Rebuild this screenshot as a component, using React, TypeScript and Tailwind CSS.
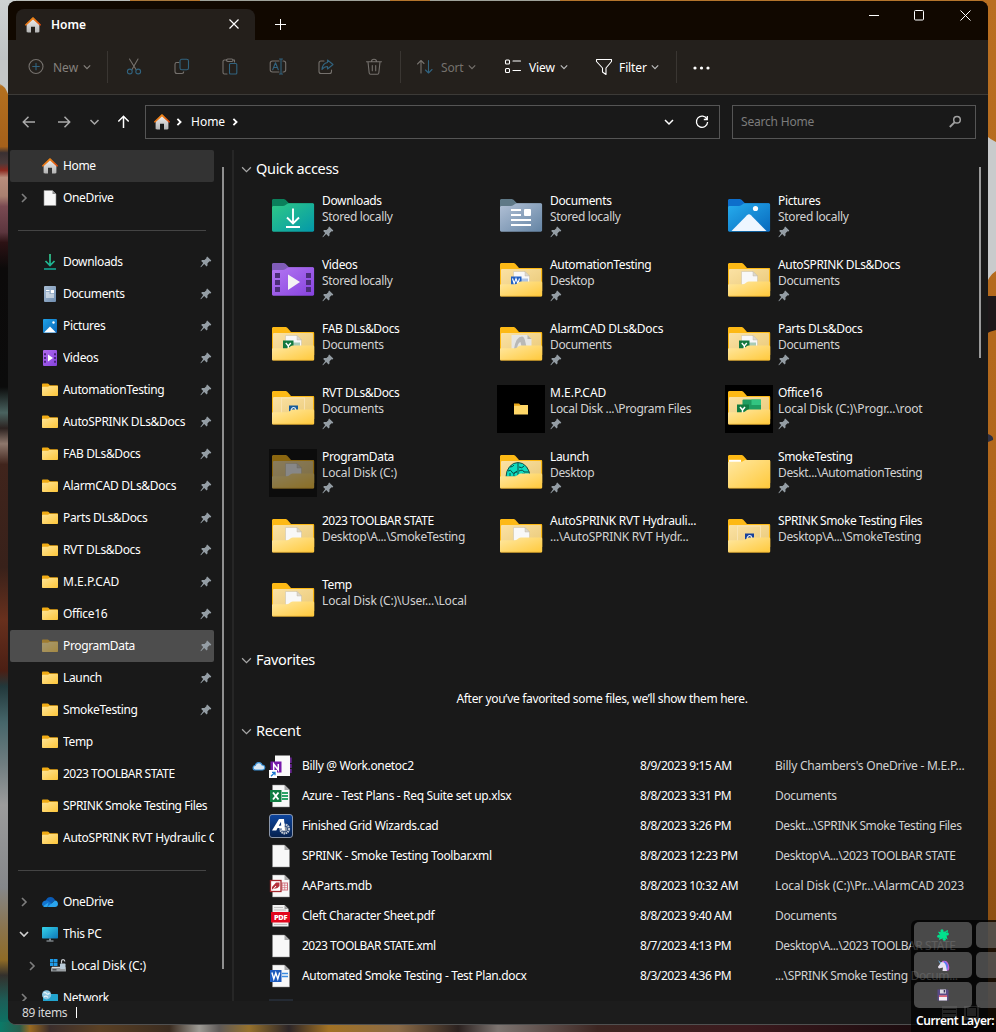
import React from "react";

/* ---------- wallpaper ---------- */

function Wallpaper() {
  return (
    <svg className="absolute inset-0" width="996" height="1032" viewBox="0 0 996 1032" aria-hidden="true">
      <defs>
        <linearGradient id="wl" x1="0" y1="0" x2="0" y2="1032" gradientUnits="userSpaceOnUse">
          <stop offset="0" stopColor="#cfd2d2" />
          <stop offset="0.079" stopColor="#b9bdbf" />
          <stop offset="0.084" stopColor="#b4701f" />
          <stop offset="0.142" stopColor="#a5601a" />
          <stop offset="0.148" stopColor="#3a3032" />
          <stop offset="0.158" stopColor="#4a3a3a" />
          <stop offset="0.165" stopColor="#8c2a20" />
          <stop offset="0.172" stopColor="#b98d7c" />
          <stop offset="0.19" stopColor="#a98070" />
          <stop offset="0.2" stopColor="#7a4a52" />
          <stop offset="0.225" stopColor="#5c363e" />
          <stop offset="0.235" stopColor="#2c1214" />
          <stop offset="0.26" stopColor="#0c0a0a" />
          <stop offset="0.375" stopColor="#0b0b0b" />
          <stop offset="0.4" stopColor="#49625f" />
          <stop offset="0.415" stopColor="#2c2220" />
          <stop offset="0.43" stopColor="#8d776c" />
          <stop offset="0.45" stopColor="#40241c" />
          <stop offset="0.55" stopColor="#38211a" />
          <stop offset="0.6" stopColor="#68301d" />
          <stop offset="0.65" stopColor="#4b1f14" />
          <stop offset="0.665" stopColor="#22383b" />
          <stop offset="0.7" stopColor="#46666a" />
          <stop offset="0.74" stopColor="#6f7d80" />
          <stop offset="0.78" stopColor="#9c9c9c" />
          <stop offset="0.86" stopColor="#85878a" />
          <stop offset="0.9" stopColor="#8b744d" />
          <stop offset="0.93" stopColor="#8f6b26" />
          <stop offset="0.945" stopColor="#33302c" />
          <stop offset="0.97" stopColor="#1c5e58" />
          <stop offset="1" stopColor="#067a68" />
        </linearGradient>
        <linearGradient id="wr" x1="0" y1="0" x2="0" y2="1032" gradientUnits="userSpaceOnUse">
          <stop offset="0" stopColor="#b96f21" />
          <stop offset="0.5" stopColor="#b0661b" />
          <stop offset="0.9" stopColor="#8b4f12" />
          <stop offset="1" stopColor="#3a200a" />
        </linearGradient>
        <linearGradient id="wb" x1="0" y1="0" x2="996" y2="0" gradientUnits="userSpaceOnUse">
          <stop offset="0" stopColor="#0a7a68" />
          <stop offset="0.02" stopColor="#2b5d4c" />
          <stop offset="0.03" stopColor="#9a6a20" />
          <stop offset="0.05" stopColor="#3b2e2c" />
          <stop offset="0.1" stopColor="#5a4024" />
          <stop offset="0.17" stopColor="#3b2c20" />
          <stop offset="0.2" stopColor="#9d9a94" />
          <stop offset="0.22" stopColor="#5f5a58" />
          <stop offset="0.25" stopColor="#96712c" />
          <stop offset="0.29" stopColor="#2d2628" />
          <stop offset="0.33" stopColor="#a27224" />
          <stop offset="0.4" stopColor="#8a6a46" />
          <stop offset="0.46" stopColor="#2c2220" />
          <stop offset="0.5" stopColor="#7d7470" />
          <stop offset="0.6" stopColor="#3d2622" />
          <stop offset="0.75" stopColor="#3c1a1e" />
          <stop offset="0.9" stopColor="#1f0d10" />
          <stop offset="1" stopColor="#120a08" />
        </linearGradient>
      </defs>
      <rect width="996" height="1032" fill="#2a1c14" />
      <rect width="996" height="3" fill="#b5752c" />
      <rect width="130" height="3" fill="#b9bcb8" />
      <rect x="200" width="190" height="3" fill="#9fa29a" />
      <rect x="430" width="130" height="3" fill="#9fa29a" />
      <rect x="140" width="50" height="3" fill="#a8783c" />
      <rect width="16" height="1032" fill="url(#wl)" />
      <path d="M0 84q5 2 8 10V60H0z" fill="#c4c7c7" />
      <rect x="980" width="16" height="1032" fill="url(#wr)" />
      <path d="M984 134q6 5 12 8V271q-7 4-12 18z" fill="#c9cbcc" />
      <path d="M984 296h12v34q-6 1-12 5z" fill="#1e181a" />
      <path d="M988 434q6 2 5 6l-5 2z" fill="#2c2f42" />
      <rect y="1022" width="996" height="10" fill="url(#wb)" />
    </svg>
  );
}

/* ---------- small glyphs ---------- */

function Chevron({ dir = "down", size = 8, color = "#fff", w = 1.2 }: { dir?: "down" | "right"; size?: number; color?: string; w?: number }) {
  return (
    <svg width={size} height={size} viewBox="0 0 8 8" fill="none" stroke={color} strokeWidth={w} className="shrink-0">
      {dir === "down" ? <path d="M.8 2.4 4 5.6l3.2-3.2" /> : <path d="M2.4.8 5.6 4 2.4 7.2" />}
    </svg>
  );
}

function Pin() {
  return (
    <svg width="12" height="12" viewBox="0 0 12 12" className="shrink-0">
      <path d="M7.200.5 11.300 4.500 10.600 5.400 9.600 5.200 7.500 7.200V9.600L6.600 10.400 4.200 8 1 11.200.4 10.900 3.200 7 1.200 4.900 2 4.100H4.500L6.600 2.100 6.400 1.200Z" fill="#949da4" />
    </svg>
  );
}

function HouseIcon() {
  return (
    <svg width="18" height="18" viewBox="0 0 18 18" className="shrink-0">
      <defs>
        <linearGradient id="hw" x1="0" y1="0" x2="0" y2="1">
          <stop offset="0" stopColor="#f2f2f2" />
          <stop offset="1" stopColor="#b4b4b4" />
        </linearGradient>
        <linearGradient id="hr" x1="0" y1="0" x2="1" y2="1">
          <stop offset="0" stopColor="#f7a01c" />
          <stop offset="1" stopColor="#d8420c" />
        </linearGradient>
      </defs>
      <path d="M2.600 8 9 2l6.400 6v7.200c0 .8-.4 1.200-1.200 1.200H11v-5.600H7v5.600H3.800c-.8 0-1.200-.4-1.200-1.200z" fill="url(#hw)" />
      <path d="M8.300 1.500c.5-.4.9-.4 1.400 0l7.200 7c.4.5-.5 1.600-1.100 1.100L9 3.500 2.200 9.600c-.6.5-1.500-.6-1.100-1.100z" fill="url(#hr)" />
    </svg>
  );
}

function ToolSvg({ children, color = "#75716d" }: { children: React.ReactNode; color?: string }) {
  return (
    <svg width="18" height="18" viewBox="0 0 18 18" fill="none" stroke={color} strokeWidth="1.1" strokeLinecap="round" strokeLinejoin="round" className="shrink-0">
      {children}
    </svg>
  );
}
const BLUE = "#31637f";

/* ---------- sidebar icons ---------- */

function FolderSmall({ dim }: { dim?: boolean }) {
  return (
    <svg width="16" height="14" viewBox="0 0 16 14" className="shrink-0" opacity={dim ? 0.5 : 1}>
      <defs>
        <linearGradient id="fs" x1="0" y1="0" x2="1" y2="1">
          <stop offset="0" stopColor="#ffe596" />
          <stop offset="1" stopColor="#fdc63a" />
        </linearGradient>
      </defs>
      <path d="M0 1.600C0 1 .4.5 1 .5h4.600c.5 0 .8.2 1.100.5l1.100 1.200H15c.6 0 1 .4 1 1V9H0z" fill="#f0ab14" />
      <path d="M0 4.800c0-.6.4-1 1-1h5l1.300-.8H15c.6 0 1 .4 1 1v8c0 .6-.4 1-1 1H1c-.6 0-1-.4-1-1z" fill="url(#fs)" />
    </svg>
  );
}

function SmallIcon({ kind }: { kind: string }) {
  switch (kind) {
    case "home":
      return <HouseIcon />;
    case "file":
      return (
        <svg width="16" height="16" viewBox="0 0 16 16">
          <path d="M2 .5h8.500L14 4v11.500H2z" fill="#f7f7f7" stroke="#8e8e8e" strokeWidth=".6" />
          <path d="M10.500.5V4H14z" fill="#8d8d8d" />
        </svg>
      );
    case "downloads":
      return (
        <svg width="16" height="16" viewBox="0 0 16 16" fill="none" strokeWidth="1.7">
          <defs>
            <linearGradient id="dg" x1="0" y1="0" x2="0" y2="16" gradientUnits="userSpaceOnUse">
              <stop offset="0" stopColor="#35c78a" />
              <stop offset="1" stopColor="#10a99a" />
            </linearGradient>
          </defs>
          <path d="M8.010 0 8 11.500M3.500 7 8 11.600 12.500 7M2 15l12-.01" stroke="url(#dg)" />
        </svg>
      );
    case "documents":
      return (
        <svg width="16" height="16" viewBox="0 0 16 16">
          <defs>
            <linearGradient id="dc" x1="0" y1="0" x2="1" y2="1">
              <stop offset="0" stopColor="#a9bdd4" />
              <stop offset="1" stopColor="#6f8db0" />
            </linearGradient>
          </defs>
          <rect x="2" width="12" height="16" rx="1" fill="url(#dc)" />
          <path d="M4 4.500h3.500M4 7h3.500M4 9h8M4 11h8" stroke="#fff" strokeWidth="1" />
          <rect x="8.800" y="4" width="3.200" height="3.200" fill="#fff" />
        </svg>
      );
    case "pictures":
      return (
        <svg width="16" height="16" viewBox="0 0 16 16">
          <defs>
            <linearGradient id="pc" x1="0" y1="0" x2="1" y2="1">
              <stop offset="0" stopColor="#1ea2e8" />
              <stop offset="1" stopColor="#0b66b8" />
            </linearGradient>
          </defs>
          <rect x="1" y="1" width="14" height="14" rx="1" fill="url(#pc)" />
          <path d="M2 14.500 8 8.500l6 6z" fill="#fff" />
          <circle cx="11.500" cy="4.500" r="1.200" fill="#fff" />
        </svg>
      );
    case "videos":
      return (
        <svg width="16" height="16" viewBox="0 0 16 16">
          <defs>
            <linearGradient id="vd" x1="0" y1="0" x2="1" y2="1">
              <stop offset="0" stopColor="#b16af0" />
              <stop offset="1" stopColor="#8542dc" />
            </linearGradient>
          </defs>
          <rect x="1" width="14" height="16" rx="1" fill="url(#vd)" />
          <path d="M2 3.200h2v2H2zM2 7h2v2H2zM2 10.800h2v2H2zM12 3.200h2v2h-2zM12 7h2v2h-2zM12 10.800h2v2h-2z" fill="#4c2480" />
          <path d="M6 4.500 11 8l-5 3.500z" fill="#fff" />
        </svg>
      );
    case "cloud":
      return (
        <svg width="16" height="12" viewBox="0 0 16 12">
          <path d="M3 9.500C3 4 5 1 8.500 1c2.300 0 4 1.500 4.700 3.600L7 9z" fill="#0a5bb5" />
          <path d="M0 8.500C0 6 2 4.600 4 4.600c2 0 4 1.500 8 5.500H3C1.300 10.100 0 9.900 0 8.500z" fill="#1273cf" />
          <path d="M5.500 10.800 13 4.600c1.800.2 3 1.700 3 3.300 0 1.800-1.300 3-3 3H3C2 10.900 1.500 10.700 1 10.200L6.500 6.500z" fill="#2aa5ef" />
        </svg>
      );
    case "pc":
      return (
        <svg width="16" height="16" viewBox="0 0 16 16">
          <defs>
            <linearGradient id="mn" x1="0" y1="0" x2="1" y2="1">
              <stop offset="0" stopColor="#35d3ea" />
              <stop offset="1" stopColor="#0d77b8" />
            </linearGradient>
          </defs>
          <rect x="0" y="1" width="16" height="11.500" rx=".7" fill="url(#mn)" />
          <path d="M7 12.500h2v2H7z" fill="#7d8a92" />
          <path d="M4.500 14.500h7v1h-7z" fill="#aab4ba" />
        </svg>
      );
    case "disk":
      return (
        <svg width="16" height="16" viewBox="0 0 16 16">
          <path d="M0 1h3.500v3.300H0zM4 1h3.500v3.300H4zM0 4.800h3.500v3.300H0zM4 4.800h3.500v3.300H4z" fill="#1f9be8" />
          <path d="M2 8.800h13l1 1.700H1z" fill="#dadada" />
          <rect x="1" y="10.200" width="15" height="3.300" rx=".6" fill="#9aa0a4" />
          <rect x="2.500" y="11.200" width="4" height="1.200" fill="#3a3f42" />
          <path d="M11.500 5.500V3.500c0-2.600 3.300-2.600 3.300 0" fill="none" stroke="#c9ccd0" strokeWidth="1.200" />
          <rect x="10" y="5.500" width="5.500" height="5.500" rx=".8" fill="#b9cbd8" />
        </svg>
      );
    case "network":
      return (
        <svg width="16" height="16" viewBox="0 0 16 16">
          <rect x="1" y="4" width="15" height="9.500" rx=".7" fill="#22a4cf" />
          <circle cx="4.600" cy="4.800" r="4.600" fill="#8cc6e2" />
          <path d="M1.500 3q2-1 3 .5t3-.5M2 7q2-2 4 .5" stroke="#e9f6fb" strokeWidth="1.200" fill="none" />
        </svg>
      );
    case "folderdim":
      return <FolderSmall dim />;
    default:
      return <FolderSmall />;
  }
}

/* ---------- large folder icons ---------- */

function SheetTop({ accent }: { accent?: string }) {
  return (
    <g>
      <path d="M16.500 14.500h11.500l4.500 4.500v9H16.500z" fill="#f8f8f8" stroke="#c9bfa6" strokeWidth=".5" />
      <path d="M28 14.500v4.500h4.500z" fill="#ddd8cc" stroke="#bdb39c" strokeWidth=".4" />
      {accent && (
        <>
          <path d="M24 21.500h7v6h-7z" fill={accent} opacity=".35" />
          <rect x="14" y="19.500" width="10.500" height="9" fill={accent} />
        </>
      )}
    </g>
  );
}

function BigFolder({ kind }: { kind: string }) {
  const yellow = !["downloads", "documents", "pictures", "videos"].includes(kind);
  if (kind === "mini") {
    return (
      <svg width="48" height="48" viewBox="0 0 48 48" className="shrink-0">
        <rect width="48" height="48" fill="#000" />
        <path d="M17 18.500h5l1.500 1.500H31v8H17z" fill="#e8a617" />
        <path d="M17 20.700h5.500l1.200-.7H31v9.500H17z" fill="#ffd768" />
      </svg>
    );
  }
  if (!yellow) {
    const tab = { downloads: "#0b7f5b", documents: "#5f7987", pictures: "#0d6ecb", videos: "#805cb8" }[kind];
    const [a, b] = ({ downloads: ["#2fc986", "#0398aa"], documents: ["#b2c1d6", "#6484a4"], pictures: ["#26adee", "#0869bd"], videos: ["#b477f2", "#8642df"] } as Record<string, string[]>)[kind];
    return (
      <svg width="48" height="48" viewBox="0 0 48 48" className="shrink-0">
        <defs>
          <linearGradient id={"big-" + kind} x1="0" y1="0" x2="1" y2="1">
            <stop offset="0" stopColor={a} />
            <stop offset="1" stopColor={b} />
          </linearGradient>
        </defs>
        <path d="M3 7.500C3 6.600 3.600 6 4.500 6h10c.8 0 1.400.2 2 .8L20 10.200h24V20H3z" fill={tab} />
        <path d="M3 14.500c0-.9.600-1.500 1.500-1.500H14c.9 0 1.500-.2 2.200-.8L18 10.900c.6-.5 1.200-.7 2-.7h23.700c.8 0 1.400.6 1.400 1.400v25.700c0 .9-.6 1.400-1.400 1.400H4.400c-.8 0-1.400-.6-1.400-1.400z" fill={"url(#big-" + kind + ")"} />
        {kind === "downloads" && <path d="M24 15.500v15M18 24.500l6 6 6-6M17 34h14" stroke="#fff" strokeWidth="1.900" fill="none" />}
        {kind === "documents" && (
          <>
            <path d="M14 17h10M14 22h10M14 27h20M14 32h20" stroke="#fff" strokeWidth="2" />
            <rect x="27" y="16" width="7" height="7" rx="1" fill="#fff" />
          </>
        )}
        {kind === "pictures" && (
          <>
            <path d="M6.500 38 22 22.300c1.400-1.400 2.600-1.400 4 0L41.500 38z" fill="#eef6ff" />
            <circle cx="30.500" cy="15.500" r="2.600" fill="#fff" />
          </>
        )}
        {kind === "videos" && (
          <>
            <path d="M6 16h5v5H6zM6 23h5v5H6zM6 30h5v5H6zM37 16h5v5h-5zM37 23h5v5h-5zM37 30h5v5h-5z" fill="#4b2d78" />
            <path d="M19 17.500 31 25l-12 8z" fill="#f4f4f4" />
          </>
        )}
      </svg>
    );
  }
  const dim = kind === "dim";
  const black = dim || kind === "office";
  return (
    <svg width="48" height="48" viewBox="0 0 48 48" className="shrink-0">
      <defs>
        <linearGradient id="bfront" x1="0" y1="0" x2="1" y2="1">
          <stop offset="0" stopColor="#ffe8a2" />
          <stop offset="1" stopColor="#ffc93b" />
        </linearGradient>
        <linearGradient id="bin" x1="0" y1="0" x2="1" y2="1">
          <stop offset="0" stopColor="#fbe2a4" />
          <stop offset="1" stopColor="#e9c877" />
        </linearGradient>
      </defs>
      {black && <rect width="48" height="48" fill={dim ? "#0c0c0c" : "#000"} />}
      <g opacity={dim ? 0.52 : 1}>
        <path d="M3 7.500C3 6.600 3.600 6 4.500 6h12c.8 0 1.300.2 1.800.8L22 11h22c.7 0 1.200.5 1.200 1.200V34H3z" fill="#fdb915" />
        {kind === "full" ? (
          <>
            <path d="M4 10.800h12v3H4z" fill="#fff" />
            <path d="M3 14c0-.8.5-1.300 1.300-1.300H17l3-1.700h24c.7 0 1.200.5 1.200 1.200v25.700c0 .8-.5 1.300-1.300 1.300H4.300c-.8 0-1.300-.5-1.300-1.300z" fill="url(#bfront)" />
          </>
        ) : (
          <>
            <rect x="4" y="12" width="40" height="22" rx="1" fill="url(#bin)" />
            {(kind === "plain" || kind === "dim") && <SheetTop />}
            {kind === "word" && <SheetTop accent="#2160c4" />}
            {kind === "excel" && <SheetTop accent="#13783f" />}
            {kind === "word" && <path d="m15.500 21.500 1.700 5 1.800-5 1.800 5 1.700-5" stroke="#fff" strokeWidth="1.100" fill="none" />}
            {kind === "excel" && <path d="m16.800 22 2.500 3 2.500-3M19.300 25v3" stroke="#fff" strokeWidth="1.400" fill="none" />}
            {kind === "alarm" && (
              <>
                <path d="M14.500 14h16l4 4v10h-20z" fill="#e6e6e4" />
                <path d="M17 28q2-12.500 8-12.500 2 0 3 4l2 8.500h-5l-1.500-7q-3 1-3.500 7z" fill="#b9b9b7" />
                <path d="M30.500 14v4h4z" fill="#b9b4a8" />
              </>
            )}
            {(kind === "rvt" || kind === "sprink") && (
              <>
                <rect x="12.500" y="13" width="23" height="17" fill="none" stroke="#fae7b8" strokeWidth=".8" />
                <rect x="20" y="20.500" width="9" height="7" fill={kind === "rvt" ? "#145a9a" : "#15409c"} />
                <path d="M22 25q1.500-3.500 4-2l1 2.500" stroke="#e9f0fa" strokeWidth="1.100" fill="none" />
              </>
            )}
            {kind === "office" && (
              <>
                <rect x="17.500" y="14.500" width="18.500" height="13" rx="1" fill="#1f9d61" />
                <path d="M26.500 14.500H36v5.500h-9.500z" fill="#33c481" />
                <rect x="12" y="19.500" width="12" height="9" fill="#107c41" />
                <path d="m15 22 2.500 3 2.500-3M17.500 25v3" stroke="#fff" strokeWidth="1.500" fill="none" />
              </>
            )}
            {kind === "launch" && (
              <>
                <path d="M9 28a12 14.500 0 0 1 24 0z" fill="#0fdcc0" stroke="#123c38" strokeWidth=".9" />
                <path d="M21 14v14M11 22q3-2 4 1t5-1M13 18q3 0 4-2M17 27q-1-4 3-4M22 18q3 2 5-1M22 22q4-2 5 1h5M24 27q0-3 4-2M13 27v-3" stroke="#0b4b45" strokeWidth="1" fill="none" />
              </>
            )}
            <path d="M3 28.600c0-.8.5-1.300 1.300-1.300H18c.9 0 1.400-.2 2-.7l2-1.500c.5-.3 1-.5 1.700-.5h20.200c.8 0 1.300.5 1.300 1.300v12.300c0 .8-.5 1.300-1.300 1.300H4.300c-.8 0-1.300-.5-1.300-1.300z" fill="url(#bfront)" />
          </>
        )}
        <path d="M3.800 39.300h40.400" stroke="#d69c20" strokeWidth=".6" />
      </g>
    </svg>
  );
}

/* ---------- file icons ---------- */

function Page() {
  return (
    <g>
      <path d="M3.500 1h12l5 5v17h-17z" fill="#f8f8f8" stroke="#8a8a8a" strokeWidth=".5" />
      <path d="M15.500 1v5h5z" fill="#a9a9a9" />
    </g>
  );
}

function FileIcon({ kind }: { kind: string }) {
  return (
    <svg width="24" height="24" viewBox="0 0 24 24" className="shrink-0">
      {kind === "onenote" && (
        <>
          <path d="M6 1.500h15v20.500H6z" fill="#fafafa" />
          <path d="M21 3.500h1.700V9H21zM21 10h1.700v4H21zM21 15h1.700v4H21z" fill="#6a2594" />
          <rect x="1.500" y="7.500" width="11" height="11" fill="#7719aa" />
          <path d="M4.700 16v-6l4.600 6v-6" stroke="#fff" strokeWidth="1.500" fill="none" />
          <rect x="0" y="16" width="8" height="8" fill="#fff" />
          <path d="M2 22.200 5.500 18.700M3 18.300h3v3" stroke="#1a78d0" strokeWidth="1.300" fill="none" />
        </>
      )}
      {kind === "xml" && <Page />}
      {kind === "xlsx" && (
        <>
          <Page />
          <path d="M13 9h6M13 12h6M13 15h6" stroke="#2ba367" strokeWidth="1.800" />
          <rect x="1" y="6" width="11.500" height="12" fill="#107c41" />
          <path d="m4 8.500 5.500 7M9.500 8.500 4 15.500" stroke="#fff" strokeWidth="1.900" />
        </>
      )}
      {kind === "docx" && (
        <>
          <Page />
          <path d="M13 9.500h6M13 12.500h6" stroke="#3a8be0" strokeWidth="1.400" />
          <rect x="1" y="6" width="11.500" height="12" fill="#1c5abd" />
          <path d="m2.900 8.500 1.900 6.500 2-6 2 6 1.900-6.500" stroke="#fff" strokeWidth="1.400" fill="none" />
        </>
      )}
      {kind === "mdb" && (
        <>
          <Page />
          <rect x="13" y="9" width="5.500" height="7" fill="none" stroke="#d2707c" strokeWidth="1" />
          <path d="M13 11.300h5.500M13 13.600h5.500M15.700 9v7" stroke="#d2707c" strokeWidth=".7" />
          <rect x="1.500" y="6.500" width="10.500" height="11" fill="#fff" stroke="#a4262c" strokeWidth="1.300" />
          <path d="M3 15.500V13l4-4.500h3.500V12l-2 2z" fill="#b5303c" />
          <path d="m4 15.500 3-3.500" stroke="#fff" strokeWidth="1" />
        </>
      )}
      {kind === "pdf" && (
        <>
          <path d="M3.500 1h12l4 4v17.500h-16z" fill="#efefef" />
          <path d="M5 3.500h9M5 6h12M5 20.500h13" stroke="#b9b9b9" strokeWidth=".9" />
          <path d="M15.500 1v4h4z" fill="#9d9d9d" />
          <rect x="2" y="8" width="19" height="10.500" fill="#e2061c" />
          <text x="11.500" y="16" textAnchor="middle" fontFamily="Open Sans" fontSize="7.500" fontWeight="800" fill="#fff">PDF</text>
        </>
      )}
      {kind === "cad" && (
        <>
          <defs>
            <linearGradient id="cad" x1="0" y1="0" x2="0" y2="1">
              <stop offset="0" stopColor="#0d46a0" />
              <stop offset="1" stopColor="#06204c" />
            </linearGradient>
          </defs>
          <rect x=".5" y=".5" width="23" height="23" rx="2.500" fill="url(#cad)" stroke="#a8b2c4" strokeWidth=".8" />
          <circle cx="15.700" cy="15" r="4.300" fill="none" stroke="#c2c8d0" strokeWidth="2.200" strokeDasharray="1.500 .6" />
          <circle cx="15.700" cy="15" r="2.600" fill="#8d96a4" />
          <path d="M3 16.500 10 5h5l1 11.500h-3.200L12.400 14H8.600l-1.300 2.500zM9.800 11.700h2.400L12 7.800z" fill="#fff" />
        </>
      )}
    </svg>
  );
}

/* ---------- data ---------- */

type Nav = { t: string; k?: string; pin?: boolean; chev?: "down" | "right"; bg?: string; indent?: boolean };

const navTop: Nav[] = [
  { t: "Home", k: "home", bg: "bg-[#333333]" },
  { t: "OneDrive", k: "file", chev: "right" },
];
const navMid: Nav[] = [
  { t: "Downloads", k: "downloads", pin: true },
  { t: "Documents", k: "documents", pin: true },
  { t: "Pictures", k: "pictures", pin: true },
  { t: "Videos", k: "videos", pin: true },
  { t: "AutomationTesting", pin: true },
  { t: "AutoSPRINK DLs&Docs", pin: true },
  { t: "FAB DLs&Docs", pin: true },
  { t: "AlarmCAD DLs&Docs", pin: true },
  { t: "Parts DLs&Docs", pin: true },
  { t: "RVT DLs&Docs", pin: true },
  { t: "M.E.P.CAD", pin: true },
  { t: "Office16", pin: true },
  { t: "ProgramData", k: "folderdim", pin: true, bg: "bg-[#4d4d4d]" },
  { t: "Launch", pin: true },
  { t: "SmokeTesting", pin: true },
  { t: "Temp" },
  { t: "2023 TOOLBAR STATE" },
  { t: "SPRINK Smoke Testing Files" },
  { t: "AutoSPRINK RVT Hydraulic C" },
];
const navBottom: Nav[] = [
  { t: "OneDrive", k: "cloud", chev: "right" },
  { t: "This PC", k: "pc", chev: "down" },
  { t: "Local Disk (C:)", k: "disk", chev: "right", indent: true },
  { t: "Network", k: "network", chev: "right" },
];

const quick: [string, string, string, boolean][] = [
  ["Downloads", "Stored locally", "downloads", true],
  ["Documents", "Stored locally", "documents", true],
  ["Pictures", "Stored locally", "pictures", true],
  ["Videos", "Stored locally", "videos", true],
  ["AutomationTesting", "Desktop", "word", true],
  ["AutoSPRINK DLs&Docs", "Documents", "plain", true],
  ["FAB DLs&Docs", "Documents", "excel", true],
  ["AlarmCAD DLs&Docs", "Documents", "alarm", true],
  ["Parts DLs&Docs", "Documents", "excel", true],
  ["RVT DLs&Docs", "Documents", "rvt", true],
  ["M.E.P.CAD", "Local Disk ...\\Program Files", "mini", true],
  ["Office16", "Local Disk (C:)\\Progr...\\root", "office", true],
  ["ProgramData", "Local Disk (C:)", "dim", true],
  ["Launch", "Desktop", "launch", true],
  ["SmokeTesting", "Deskt...\\AutomationTesting", "full", true],
  ["2023 TOOLBAR STATE", "Desktop\\A...\\SmokeTesting", "plain", false],
  ["AutoSPRINK RVT Hydrauli...", "...\\AutoSPRINK RVT Hydr...", "plain", false],
  ["SPRINK Smoke Testing Files", "Desktop\\A...\\SmokeTesting", "sprink", false],
  ["Temp", "Local Disk (C:)\\User...\\Local", "plain", false],
];

const recent: [string, string, string, string][] = [
  ["onenote", "Billy @ Work.onetoc2", "8/9/2023 9:15 AM", "Billy Chambers's OneDrive - M.E.P..."],
  ["xlsx", "Azure - Test Plans - Req Suite set up.xlsx", "8/8/2023 3:31 PM", "Documents"],
  ["cad", "Finished Grid Wizards.cad", "8/8/2023 3:26 PM", "Deskt...\\SPRINK Smoke Testing Files"],
  ["xml", "SPRINK - Smoke Testing Toolbar.xml", "8/8/2023 12:23 PM", "Desktop\\A...\\2023 TOOLBAR STATE"],
  ["mdb", "AAParts.mdb", "8/8/2023 10:32 AM", "Local Disk (C:)\\Pr...\\AlarmCAD 2023"],
  ["pdf", "Cleft Character Sheet.pdf", "8/8/2023 9:40 AM", "Documents"],
  ["xml", "2023 TOOLBAR STATE.xml", "8/7/2023 4:13 PM", "Desktop\\A...\\2023 TOOLBAR STATE"],
  ["docx", "Automated Smoke Testing - Test Plan.docx", "8/3/2023 4:36 PM", "...\\SPRINK Smoke Testing Docum..."],
];

function tracking(t: string) {
  if (t.includes("(C:)")) return "tracking-[-0.16px]";
  if (t === "M.E.P.CAD") return "tracking-[0px]";
  if (t.includes("M.E.P")) return "tracking-[-0.24px]";
  if (t.includes("AlarmCAD") || t.includes("Hydr")) return "tracking-[-0.27px]";
  if (t.startsWith("2023 TOOLBAR")) return "tracking-[-0.5px]";
  if (t.includes("2023 TOOLBAR") || t.includes("Testing Files")) return "tracking-[-0.42px]";
  return "tracking-[-0.35px]";
}

/* ---------- sections ---------- */

function TitleBar() {
  return (
    <div className="flex h-[39px] shrink-0 bg-[#110800]">
      <div className="ml-2 mt-2 flex h-[31px] w-[239px] items-center rounded-t-lg bg-[#241f1b] pl-2">
        <HouseIcon />
        <span className="ml-[9px] flex-1 text-[12px] font-semibold text-white">Home</span>
        <svg width="10" height="10" viewBox="0 0 10 10" stroke="#fff" strokeWidth="1.200" className="mb-[2px] mr-[16px]">
          <path d="m.5.5 9 9M9.500.5l-9 9" />
        </svg>
      </div>
      <svg width="11" height="11" viewBox="0 0 11 11" stroke="#fff" strokeWidth="1" className="ml-5 mt-[18px]">
        <path d="M5.500 0v11M0 5.500h11" />
      </svg>
      <div className="ml-auto flex h-7 items-center gap-[35px] pr-[17px]">
        <svg width="10" height="10" viewBox="0 0 10 10" stroke="#fff"><path d="M0 5.500h10" /></svg>
        <svg width="11" height="11" viewBox="0 0 11 11" stroke="#fff" fill="none"><rect x=".5" y=".5" width="9" height="9.500" rx="1" /></svg>
        <svg width="11" height="11" viewBox="0 0 11 11" stroke="#fff"><path d="m.5.5 10 10M10.500.5l-10 10" /></svg>
      </div>
    </div>
  );
}

function Slot({ w, children }: { w: string; children: React.ReactNode }) {
  return <div className={"flex h-full shrink-0 items-center " + w}>{children}</div>;
}

function Toolbar() {
  return (
    <div className="flex h-[55px] shrink-0 items-center border-b border-[#3c3a37] bg-[#24201c] text-[12px]">
      <Slot w="w-[99px] pl-[19px] text-[#85817d]">
        <ToolSvg>
          <circle cx="9" cy="8.500" r="7" />
          <path d="M9 5.200v6.600M5.700 8.500h6.600" stroke={BLUE} />
        </ToolSvg>
        <span className="ml-2 mr-[5px] pt-[2px]">New</span>
        <Chevron color="#85817d" />
      </Slot>
      <div className="h-8 w-px bg-[#3a3632]" />
      <Slot w="w-[48px] pl-[17px]">
        <ToolSvg>
          <path d="M4.500 1 11 11.500M13 1 7 11.500" />
          <circle cx="4.800" cy="13.500" r="2.400" stroke={BLUE} />
          <circle cx="13.200" cy="13.500" r="2.400" stroke={BLUE} />
        </ToolSvg>
      </Slot>
      <Slot w="w-[48px] pl-[17px]">
        <ToolSvg>
          <path d="M6 4.500H3.700C2.600 4.500 2 5.200 2 6.200v7.300c0 1.200.8 2 2 2h5c1 0 1.700-.6 1.700-1.700" />
          <rect x="7" y="1.300" width="8.500" height="10.500" rx="1.800" stroke={BLUE} />
        </ToolSvg>
      </Slot>
      <Slot w="w-[48px] pl-[17px]">
        <ToolSvg>
          <path d="M6 2H3.500C2.700 2 2 2.600 2 3.500v11c0 .9.700 1.500 1.500 1.500H6M12 2h1.500v2" />
          <rect x="5.500" y="1" width="6.500" height="2.500" rx="1.200" />
          <rect x="8.500" y="5.500" width="7.300" height="10.500" rx="1" stroke={BLUE} />
        </ToolSvg>
      </Slot>
      <Slot w="w-[48px] pl-[17px]">
        <ToolSvg>
          <path d="M10 3H3.500C2.200 3 1.200 4 1.200 5.200v6.600c0 1.200 1 2.200 2.300 2.200H10M14 3h.5c1.200 0 2.200 1 2.200 2.200v6.600c0 1.200-1 2.200-2.200 2.200H14" />
          <path d="m3.700 11.700 2.800-7 2.800 7M4.700 9.500h3.600M12 1v15M10.500 1h3M10.500 16h3" stroke={BLUE} />
        </ToolSvg>
      </Slot>
      <Slot w="w-[48px] pl-[17px]">
        <ToolSvg>
          <path d="M7 3H4C2.800 3 2 3.800 2 5v8.500c0 1.200.8 2 2 2h8.500c1.200 0 2-.8 2-2V12" />
          <path d="M10.500 2 16 6.500 10.500 11V8.500C8 8.500 6.500 9.500 5 11.500c.3-3.800 2-6.500 5.500-7z" stroke={BLUE} />
        </ToolSvg>
      </Slot>
      <Slot w="w-[52px] pl-[17px]">
        <ToolSvg>
          <path d="M1.500 3.700h15M6.500 3.500c0-3 5-3 5 0M3 4l1.200 11c.1.700.6 1.200 1.300 1.200h7c.7 0 1.200-.5 1.300-1.200L15 4M7.300 7.500v5.300M10.700 7.500v5.300" />
        </ToolSvg>
      </Slot>
      <div className="h-8 w-px bg-[#3a3632]" />
      <Slot w="w-[88px] pl-[15px] text-[#75716d]">
        <ToolSvg>
          <path d="M5 15V2.500M1.500 6 5 2.500 8 5.500" />
          <path d="M12.500 2.500V15M9.500 12l3 3 3.500-3.500" stroke={BLUE} />
        </ToolSvg>
        <span className="ml-[7px] mr-[5px] pt-[2px] tracking-[-0.2px]">Sort</span>
        <Chevron color="#75716d" />
      </Slot>
      <Slot w="w-[91px] pl-[15px] text-white">
        <ToolSvg color="#fff">
          <rect x="1.500" y="2" width="4" height="4" rx="1" />
          <rect x="1.500" y="10.500" width="4" height="4" rx="1" />
          <path d="M9 3h7.500M9 12.500h7.500" />
        </ToolSvg>
        <span className="ml-[7px] mr-[5px] pt-[2px] tracking-[-0.1px]">View</span>
        <Chevron color="#bbb" />
      </Slot>
      <Slot w="w-[96px] pl-[15px] text-white">
        <ToolSvg color="#fff">
          <path d="M1.500 1.500h15v2L11 10v6.500L7.500 14v-4L1.500 3.500z" />
        </ToolSvg>
        <span className="ml-[6px] mr-[4px] pt-[2px] tracking-[-0.1px]">Filter</span>
        <Chevron color="#bbb" />
      </Slot>
      <div className="h-8 w-px bg-[#3a3632]" />
      <svg width="17" height="4" viewBox="0 0 17 4" fill="#fff" className="ml-4 mt-[2px]">
        <circle cx="2" cy="2" r="1.600" />
        <circle cx="8.500" cy="2" r="1.600" />
        <circle cx="15" cy="2" r="1.600" />
      </svg>
    </div>
  );
}

function NavBar() {
  return (
    <div className="flex h-[55px] shrink-0 items-center bg-[#191919] pb-[2px] text-[12px]">
      <svg width="129" height="16" viewBox="8 0 129 16" fill="none" stroke="#a9a9a9" strokeWidth="1.500" className="shrink-0">
        <path d="M35 8H23.500M28.500 2.800 23.300 8l5.200 5.200M58 8h11.500M64.500 2.800 69.700 8l-5.200 5.200M90.500 6l4 4 4-4" />
        <path d="M123.500 14V2.500M118.300 7.500l5.200-5.200 5.200 5.200" stroke="#fff" />
      </svg>
      <div className="ml-2 flex h-[34px] w-[575px] shrink-0 items-center border border-[#555] pl-[7px] text-white">
        <HouseIcon />
        <span className="ml-[4px]"><Chevron dir="right" size={8} w={1.800} /></span>
        <span className="ml-2 mr-[6px]">Home</span>
        <Chevron dir="right" size={8} w={1.800} />
        <span className="ml-auto mr-[21px]"><Chevron size={10} /></span>
        <svg width="14" height="14" viewBox="0 0 14 14" fill="none" stroke="#fff" strokeWidth="1.300" className="mr-[10px]">
          <path d="M12 4.200A5.600 5.600 0 1 0 12.600 7M12.300 1v3.500H8.800" />
        </svg>
      </div>
      <div className="ml-3 flex h-[34px] w-[244px] shrink-0 items-center justify-between border border-[#555] pl-2 pr-[13px] text-[#7c7c7c]">
        <span className="tracking-[-0.2px]">Search Home</span>
        <svg width="13" height="13" viewBox="0 0 13 13" fill="none" stroke="#a0a0a0" strokeWidth="1.500">
          <circle cx="8" cy="4.800" r="3.300" />
          <path d="M5.500 7.300.8 12" strokeWidth="1.900" />
        </svg>
      </div>
    </div>
  );
}

function NavRow({ n }: { n: Nav }) {
  return (
    <div className={"flex h-8 w-[204px] shrink-0 items-center overflow-hidden rounded-[2px] " + (n.bg ?? "") + (n.indent ? " pl-[17px]" : " pl-[9px]")}>
      <div className="flex w-[22px] shrink-0">{n.chev && <Chevron dir={n.chev} size={10} color={n.chev === "down" ? "#d0d0d0" : "#7e7e7e"} w={1.300} />}</div>
      <div className="flex w-[18px] shrink-0 justify-center"><SmallIcon kind={n.k ?? "folder"} /></div>
      <span className={"ml-1 min-w-0 flex-1 overflow-hidden whitespace-nowrap text-white " + tracking(n.t)}>{n.t}</span>
      {n.pin && <span className="mr-[2px]"><Pin /></span>}
    </div>
  );
}

function Divider() {
  return (
    <div className="flex h-8 shrink-0 items-center pl-2">
      <div className="h-px w-[188px] bg-[#444]" />
    </div>
  );
}

function Sidebar() {
  return (
    <div className="flex w-[224px] shrink-0 justify-between pl-0.5">
      <div className="flex flex-col overflow-hidden">
        {navTop.map((n, i) => <NavRow n={n} key={i} />)}
        <Divider />
        {navMid.map((n, i) => <NavRow n={n} key={i} />)}
        <Divider />
        {navBottom.map((n, i) => <NavRow n={n} key={i} />)}
      </div>
      <div className="mr-[8px] mt-[17px] h-[802px] w-[2px] bg-[#8f8f8f]" />
    </div>
  );
}

function Heading({ children, className }: { children: string; className: string }) {
  return (
    <div className={"flex h-5 shrink-0 items-center gap-1 pl-[7px] text-[14.5px] tracking-[-0.33px] text-white " + className}>
      <Chevron size={11} color="#a8a8a8" w={0.9} />
      <span>{children}</span>
    </div>
  );
}

function Main() {
  return (
    <div className="flex min-w-0 flex-1 overflow-hidden border-l-2 border-[#262626]">
      <div className="flex w-[735px] shrink-0 flex-col">
        <Heading className="mt-[9px]">Quick access</Heading>
        <div className="ml-[35px] mt-[14px] grid shrink-0 grid-cols-[228px_228px_228px]">
          {quick.map(([t, s, k, pin]) => (
            <div key={t} className="flex h-16">
              <BigFolder kind={k} />
              <div className="ml-[5px] flex flex-col whitespace-nowrap leading-4">
                <span className={"text-white " + tracking(t)}>{t}</span>
                <span className={"text-[#d2d2d2] " + tracking(s)}>{s}</span>
                {pin && <span className="mt-px"><Pin /></span>}
              </div>
            </div>
          ))}
        </div>
        <Heading className="mt-[9px]">Favorites</Heading>
        <div className="mt-[19px] h-5 shrink-0 pl-[1px] text-center leading-5 tracking-[-0.32px] text-white">After you’ve favorited some files, we’ll show them here.</div>
        <Heading className="mt-[12px]">Recent</Heading>
        <div className="mt-[10px] flex shrink-0 flex-col">
          {recent.map(([k, t, d, p], i) => (
            <div key={i} className="flex h-[30px] items-center whitespace-nowrap text-white">
              <div className="flex w-[35px] shrink-0 pl-[18px]">
                {i === 0 && (
                  <svg width="14" height="10" viewBox="0 0 14 10">
                    <path d="M3.500 9C.3 9 .3 4.800 3.300 4.500 4 1 9 .5 10 4c3.700 0 3.700 5 .3 5z" fill="#d8e6f2" stroke="#3b92d8" strokeWidth="1.100" />
                  </svg>
                )}
              </div>
              <FileIcon kind={k} />
              <span className={"ml-[9px] w-[338px] shrink-0 " + tracking(t)}>{t}</span>
              <span className="w-[135px] shrink-0 tracking-[-0.44px]">{d}</span>
              <span className={"text-[#d2d2d2] " + tracking(p)}>{p}</span>
            </div>
          ))}
          <div className="ml-[35px] mt-2 h-2 w-6 bg-[#242a33]" />
        </div>
      </div>
      <div className="ml-[10px] mt-[17px] h-[191px] w-[2px] shrink-0 bg-[#9a9a9a]" />
    </div>
  );
}

function StatusBar() {
  return (
    <div className="flex h-[23px] shrink-0 items-center bg-[#1c1c1c] pl-[14px] text-[#d8d8d8]">
      <span className="text-[12px] tracking-[-0.35px]">89 items</span>
      <div className="ml-[9px] h-[11px] w-px bg-white" />
      <svg width="38" height="14" viewBox="0 0 38 14" className="ml-auto mr-2" fill="none" stroke="#dcdcdc">
        <rect width="15" height="14" fill="#8a8a8a" stroke="none" />
        <rect x="22" width="15" height="14" fill="#8a8a8a" stroke="none" />
        <path d="M1 3.500h13M1 7.500h13M1 11.500h13M24.500 1.500h10v9h-10z" stroke="#111" />
      </svg>
    </div>
  );
}

function LayerPanel() {
  const cell = "flex h-[26px] w-[58px] items-center justify-center rounded-[5px] bg-[#828282]/55";
  return (
    <div className="absolute left-[911px] top-[920px] flex h-[112px] w-[85px] flex-col overflow-hidden rounded-tl-md bg-black/75 pl-[3px] pt-[2px]">
      <div className="grid shrink-0 grid-cols-[58px_58px] gap-x-[4px] gap-y-[4px]">
        <div className={cell}>
          <svg width="12" height="12" viewBox="0 0 12 12" fill="#00e28d">
            <path d="m2.200 3.500 7-1.200L10 9 3.300 10z" />
            <circle cx="5" cy="1.900" r="1.600" />
            <circle cx="10.300" cy="5" r="1.600" />
            <circle cx="7.300" cy="10.300" r="1.500" />
            <circle cx="1.700" cy="7.200" r="1.500" />
            <path d="M.8 2.800 4 3 3 5.500zM8.500 2 11 1l-.5 3zM9 8l2.200 2.500L8.500 9.500zM2 11l.5-3L5 9.500z" />
          </svg>
        </div>
        <div className={cell} />
        <div className={cell}>
          <svg width="13" height="13" viewBox="0 0 13 13">
            <path d="M1 1 5 4.500 3.500 5.500z" fill="#6fb6f0" />
            <path d="M5 2q5-1.500 6.500 3 1.500 4 0 6.500L8 12z" fill="#c964d8" />
            <path d="M7 2q3 1 4 5l-1 5-3-4z" fill="#5b7cf0" />
            <path d="M4.500 3Q8 3 9 7l1 5H5.500L6 8.500 2 9.500.8 8z" fill="#e9e2f2" />
          </svg>
        </div>
        <div className={cell} />
        <div className={cell}>
          <svg width="12" height="12" viewBox="0 0 12 12">
            <path d="M.5.5h10l1 1v10H.5z" fill="#584a86" />
            <path d="M3 .5h6v4H3z" fill="#d9d9e2" />
            <path d="M6.700 1h1.500v2.500H6.700z" fill="#39305c" />
            <path d="M2 6.500h8v5H2z" fill="#f1eff5" />
            <path d="M2 6.500h8v1.200H2z" fill="#d7344c" />
          </svg>
        </div>
        <div className={cell} />
      </div>
      <span className="ml-0.5 mt-[4px] whitespace-nowrap text-[12px] font-semibold leading-[18px] tracking-[-0.4px] text-white">Current Layer:</span>
    </div>
  );
}

export default function App() {
  return (
    <div className="relative h-[1032px] w-[996px] overflow-hidden bg-[#191919] pl-2 pt-px font-['Noto_Sans',sans-serif] text-[12px]">
      <Wallpaper />
      <div className="relative flex h-[1024px] w-[980px] flex-col overflow-hidden rounded-lg border-b border-[#505050] bg-[#191919]">
        <TitleBar />
        <Toolbar />
        <NavBar />
        <div className="flex min-h-0 flex-1 text-[12px] tracking-[-0.35px]">
          <Sidebar />
          <Main />
        </div>
        <StatusBar />
      </div>
      <LayerPanel />
    </div>
  );
}
